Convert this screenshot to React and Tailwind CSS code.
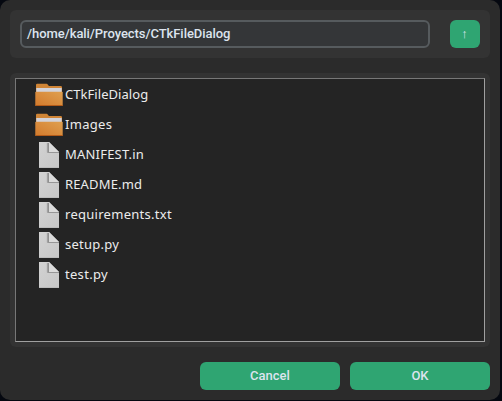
const entries = [
  { name: "CTkFileDialog", folder: true, tracking: "tracking-[0.05px]" },
  { name: "Images", folder: true, tracking: "tracking-[0.3px]" },
  { name: "MANIFEST.in", tracking: "tracking-[0.2px]" },
  { name: "README.md", tracking: "tracking-[0.15px]" },
  { name: "requirements.txt", tracking: "tracking-[0.28px]" },
  { name: "setup.py", tracking: "tracking-[0.25px]" },
  { name: "test.py", tracking: "tracking-[0.3px]" },
];

function FolderIcon() {
  return (
    <svg width="28" height="24" viewBox="0 0 28 24" className="shrink-0">
      <defs>
        <linearGradient id="folder" x1="0" y1="1" x2="1" y2="0">
          <stop offset="0" stopColor="#d37a2c" />
          <stop offset="1" stopColor="#dfa050" />
        </linearGradient>
      </defs>
      <path d="M1 2Q1 .7 2.300 .7H11.500Q12.500 .7 13 2L14 3H25.700Q27 3 27 4.300V12H1Z" fill="#d08536" />
      <path d="M1.300 5H26.700V10H1.300Z" fill="#d3d3da" />
      <path d="M.3 9.500Q.3 8.800 1 8.800H27Q27.700 8.800 27.700 9.500V22.700H.3Z" fill="url(#folder)" />
      <path d="M.3 22H27.700V23H.3Z" fill="#b35a18" />
    </svg>
  );
}

function FileIcon() {
  return (
    <svg width="28" height="26" viewBox="0 0 28 26" className="shrink-0">
      <defs>
        <linearGradient id="paper" x1="0" y1="0" x2="1" y2="1">
          <stop offset="0" stopColor="#d2d2d2" />
          <stop offset="1" stopColor="#c6c6c6" />
        </linearGradient>
        <linearGradient id="fold" x1="0" y1="0" x2="1" y2="0">
          <stop offset="0" stopColor="#c0c0c0" />
          <stop offset="1" stopColor="#777777" />
        </linearGradient>
      </defs>
      <path d="M4 0H14L24 10V26H4Z" fill="url(#paper)" />
      <path d="M11.500 1H13.800V10.500H11.500Z" fill="url(#fold)" />
      <path d="M12.500 10H24V11H12.500Z" fill="#959595" />
      <path d="M14 0L24 10H14Z" fill="#dadada" />
      <path d="M4 25.300H24V26H4Z" fill="#b5b5b5" />
    </svg>
  );
}

export default function App() {
  return (
    <div className="h-[401px] w-[502px] overflow-hidden bg-[#050810]">
      <main className="flex h-[400px] w-[500px] flex-col rounded-[10px] bg-[#2b2b2b] p-[10px] font-['Roboto',sans-serif] text-[13px] font-medium text-[#dce4ee]">
        <header className="flex h-12 items-center justify-between rounded-md bg-[#333333] px-[10px]">
          <div className="flex h-7 w-[410px] items-center rounded-md border-2 border-[#565b5e] bg-[#343638] pl-[5px] tracking-[-0.06px]">
            /home/kali/Proyects/CTkFileDialog
          </div>
          <button className="flex h-7 w-[30px] items-center justify-center rounded-md bg-[#2fa572] pr-px font-['Liberation_Sans',sans-serif] text-[13px] font-normal">
            ↑
          </button>
        </header>
        <section className="mt-[15px] h-[274px] rounded-md bg-[#333333] p-[5px]">
          <ul className="h-[264px] border border-t-[#777777] border-r-[#a0a0a0] border-b-[#a0a0a0] border-l-[#777777] bg-[#242424] pt-px pl-[19px] font-['Noto_Sans',sans-serif] text-[13px] font-normal text-[#ececec]">
            {entries.map((entry) => (
              <li key={entry.name} className="flex h-[30px] items-center gap-[2px]">
                {entry.folder ? <FolderIcon /> : <FileIcon />}
                <span className={entry.tracking}>{entry.name}</span>
              </li>
            ))}
          </ul>
        </section>
        <footer className="mt-[15px] flex justify-end gap-[10px]">
          <button className="h-7 w-[140px] rounded-md bg-[#2fa572]">Cancel</button>
          <button className="h-7 w-[140px] rounded-md bg-[#2fa572]">OK</button>
        </footer>
      </main>
    </div>
  );
}
